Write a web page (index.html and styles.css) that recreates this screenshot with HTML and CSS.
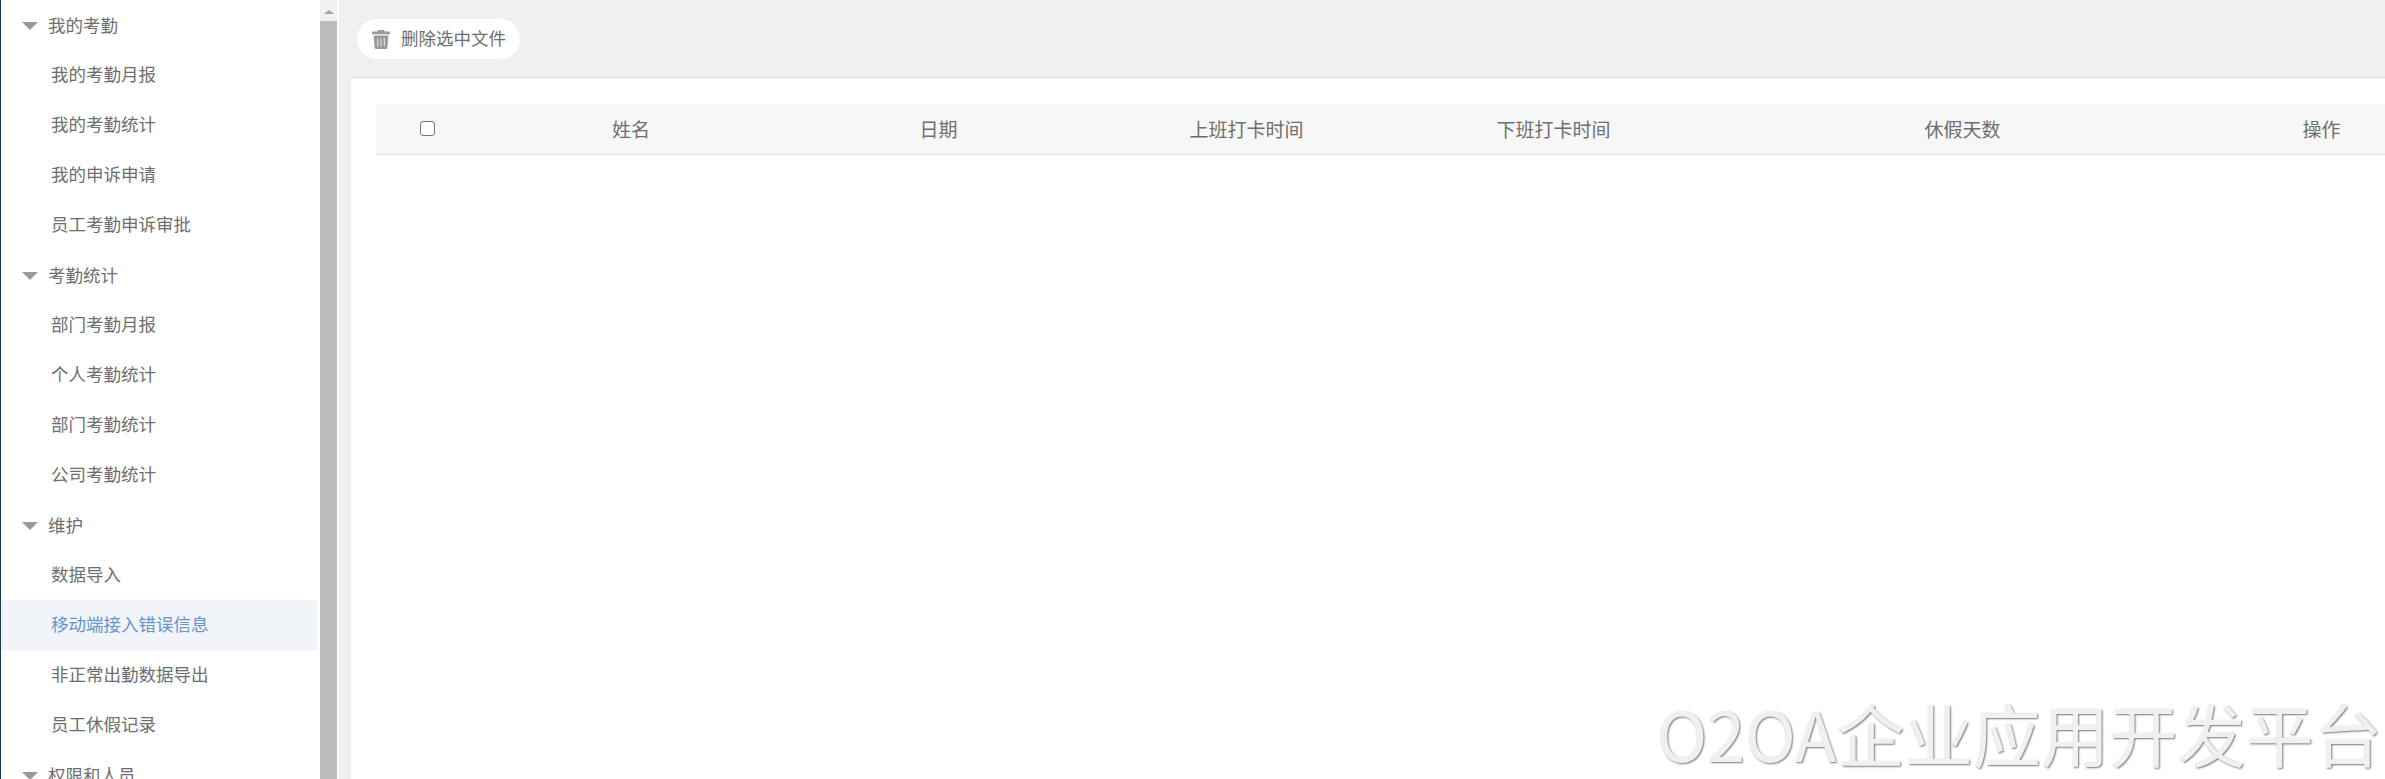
FILE: index.html
```html
<!DOCTYPE html>
<html lang="zh-CN">
<head>
    <meta charset="UTF-8">
    <title>O2OA 考勤</title>
    <link rel="stylesheet" href="styles.css">
</head>
<body>
    <div class="page">
        <div class="sidebar">
            <div class="menu">
                <div class="group"><span class="arrow"></span>我的考勤</div>
                <div class="item">我的考勤月报</div>
                <div class="item">我的考勤统计</div>
                <div class="item">我的申诉申请</div>
                <div class="item">员工考勤申诉审批</div>
                <div class="group"><span class="arrow"></span>考勤统计</div>
                <div class="item">部门考勤月报</div>
                <div class="item">个人考勤统计</div>
                <div class="item">部门考勤统计</div>
                <div class="item">公司考勤统计</div>
                <div class="group"><span class="arrow"></span>维护</div>
                <div class="item">数据导入</div>
                <div class="item active">移动端接入错误信息</div>
                <div class="item">非正常出勤数据导出</div>
                <div class="item">员工休假记录</div>
                <div class="group"><span class="arrow"></span>权限和人员</div>
            </div>
            <div class="scrollbar">
                <span class="scroll-up"></span>
                <div class="thumb"></div>
            </div>
        </div>
        <div class="main">
            <div class="toolbar">
                <div class="del-btn">
                    <svg class="trash" viewBox="0 0 18 20" width="18" height="20">
                        <path d="M6 1h6l.6 1.6H17a1 1 0 0 1 1 1v1.6H0V3.6a1 1 0 0 1 1-1h4.4z" fill="#999"/>
                        <path d="M1.6 6.4h14.8l-1 12a1.6 1.6 0 0 1-1.6 1.6H4.2a1.6 1.6 0 0 1-1.6-1.6z" fill="#999"/>
                        <path d="M5.6 9v8.5M9 9v8.5M12.4 9v8.5" stroke="#d8d8d8" stroke-width="1.2" fill="none"/>
                    </svg>
                    <span class="del-label">删除选中文件</span>
                </div>
            </div>
            <div class="content">
                <div class="table-head">
                    <div class="cell"><span class="check"></span></div>
                    <div class="cell">姓名</div>
                    <div class="cell">日期</div>
                    <div class="cell">上班打卡时间</div>
                    <div class="cell">下班打卡时间</div>
                    <div class="cell">休假天数</div>
                    <div class="cell">操作</div>
                </div>
            </div>
        </div>
    </div>
    <div class="watermark">O2OA企业应用开发平台</div>
</body>
</html>
```

FILE: styles.css
```css
html, body {
    margin: 0;
    height: 100%;
    overflow: hidden;
}
body {
    background: #fff;
    color: #6e6e6e;
    font-family: "Noto Sans CJK SC", "Liberation Sans", sans-serif;
    font-size: 17.5px;
}
.page {
    display: flex;
    height: 779px;
}
.sidebar {
    display: flex;
    width: 339px;
    flex: none;
    border-left: 1px solid #1b3a4f;
    box-sizing: border-box;
    overflow: hidden;
}
.menu {
    width: 317px;
    flex: none;
}
.group, .item {
    height: 50px;
    line-height: 48px;
    white-space: nowrap;
}
.group {
    display: flex;
    align-items: center;
    padding-left: 21px;
}
.arrow {
    width: 0;
    height: 0;
    margin: 2px 10px 0 0;
    border-left: 8px solid transparent;
    border-right: 8px solid transparent;
    border-top: 8px solid #999;
}
.item {
    padding-left: 50px;
}
.item.active {
    background: #f1f5f9;
    color: #6694cc;
}
.scrollbar {
    width: 17px;
    margin-left: 2px;
    flex: none;
    background: #f1f1f1;
}
.scroll-up {
    display: block;
    width: 0;
    margin: 10px auto 7px;
    border-left: 5px solid transparent;
    border-right: 5px solid transparent;
    border-bottom: 4px solid #a3a3a3;
}
.thumb {
    height: 758px;
    background: #bdbdbd;
}
.main {
    flex: 1;
    min-width: 0;
    background: #f0f0f0;
    padding-left: 12px;
}
.toolbar {
    height: 78px;
    box-sizing: border-box;
    padding: 19px 0 0 6px;
    border-bottom: 1px solid #dcdcdc;
}
.del-btn {
    display: inline-flex;
    align-items: center;
    height: 40px;
    padding: 0 14px 0 15px;
    background: #fff;
    border-radius: 20px;
}
.del-label {
    margin-bottom: 3px;
}
.trash {
    margin-right: 11px;
}
.content {
    height: 701px;
    background: #fff;
    padding: 26px 0 0 25px;
    box-sizing: border-box;
    overflow: hidden;
}
.table-head {
    display: grid;
    grid-template-columns: 102px 306px 309px 307px 307px 511px 207px;
    width: 2049px;
    height: 50px;
    line-height: 48px;
    font-size: 19px;
    align-items: center;
    background: #f7f7f7;
    border-bottom: 1px solid #e4e4e4;
}
.cell {
    text-align: center;
    white-space: nowrap;
}
.check {
    display: block;
    width: 13px;
    height: 13px;
    margin: 0 auto 2px;
    border: 1px solid #767676;
    border-radius: 3px;
    background: #fff;
}
.watermark {
    position: absolute;
    right: 3px;
    bottom: 8px;
    font-size: 68.2px;
    line-height: 76px;
    color: #f0f0f0;
    text-shadow: 1px 1px 2px #777;
    white-space: nowrap;
}
```
